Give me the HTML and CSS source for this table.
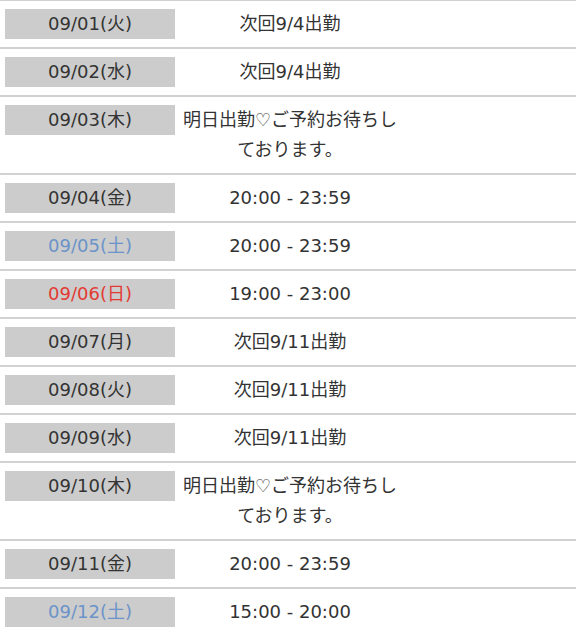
FILE: index.html
```html
<!DOCTYPE html>
<html lang="ja">
<head>
<meta charset="utf-8">
<link rel="stylesheet" href="styles.css">
</head>
<body>
<div class="schedule">
  <div class="row"><div class="date">09/01(火)</div><div class="time">次回9/4出勤</div></div>
  <div class="row"><div class="date">09/02(水)</div><div class="time">次回9/4出勤</div></div>
  <div class="row"><div class="date">09/03(木)</div><div class="time">明日出勤♡ご予約お待ちしております。</div></div>
  <div class="row"><div class="date">09/04(金)</div><div class="time">20:00 - 23:59</div></div>
  <div class="row"><div class="date sat">09/05(土)</div><div class="time">20:00 - 23:59</div></div>
  <div class="row"><div class="date sun">09/06(日)</div><div class="time">19:00 - 23:00</div></div>
  <div class="row"><div class="date">09/07(月)</div><div class="time">次回9/11出勤</div></div>
  <div class="row"><div class="date">09/08(火)</div><div class="time">次回9/11出勤</div></div>
  <div class="row"><div class="date">09/09(水)</div><div class="time">次回9/11出勤</div></div>
  <div class="row"><div class="date">09/10(木)</div><div class="time">明日出勤♡ご予約お待ちしております。</div></div>
  <div class="row"><div class="date">09/11(金)</div><div class="time">20:00 - 23:59</div></div>
  <div class="row"><div class="date sat">09/12(土)</div><div class="time">15:00 - 20:00</div></div>
</div>
</body>
</html>
```
FILE: styles.css
```css
html, body {
  margin: 0;
  padding: 0;
  background: #fff;
}
body {
  font-family: "DejaVu Sans", "Noto Sans CJK JP", sans-serif;
  color: #333;
  font-size: 18px;
  overflow: hidden;
}
.schedule {
  border-top: 1px solid #d2d2d2;
}
.row {
  display: grid;
  grid-template-columns: 175px 230px 1fr;
  align-items: start;
  padding: 8px 0;
  border-bottom: 2px solid #d2d2d2;
}
.date {
  margin-left: 5px;
  width: 170px;
  height: 30px;
  line-height: 30px;
  background: #cccccc;
  text-align: center;
  color: #333;
  white-space: nowrap;
}
.date.sat { color: #6b93c9; }
.date.sun { color: #e23a32; }
.time {
  line-height: 30px;
  text-align: center;
}
```
